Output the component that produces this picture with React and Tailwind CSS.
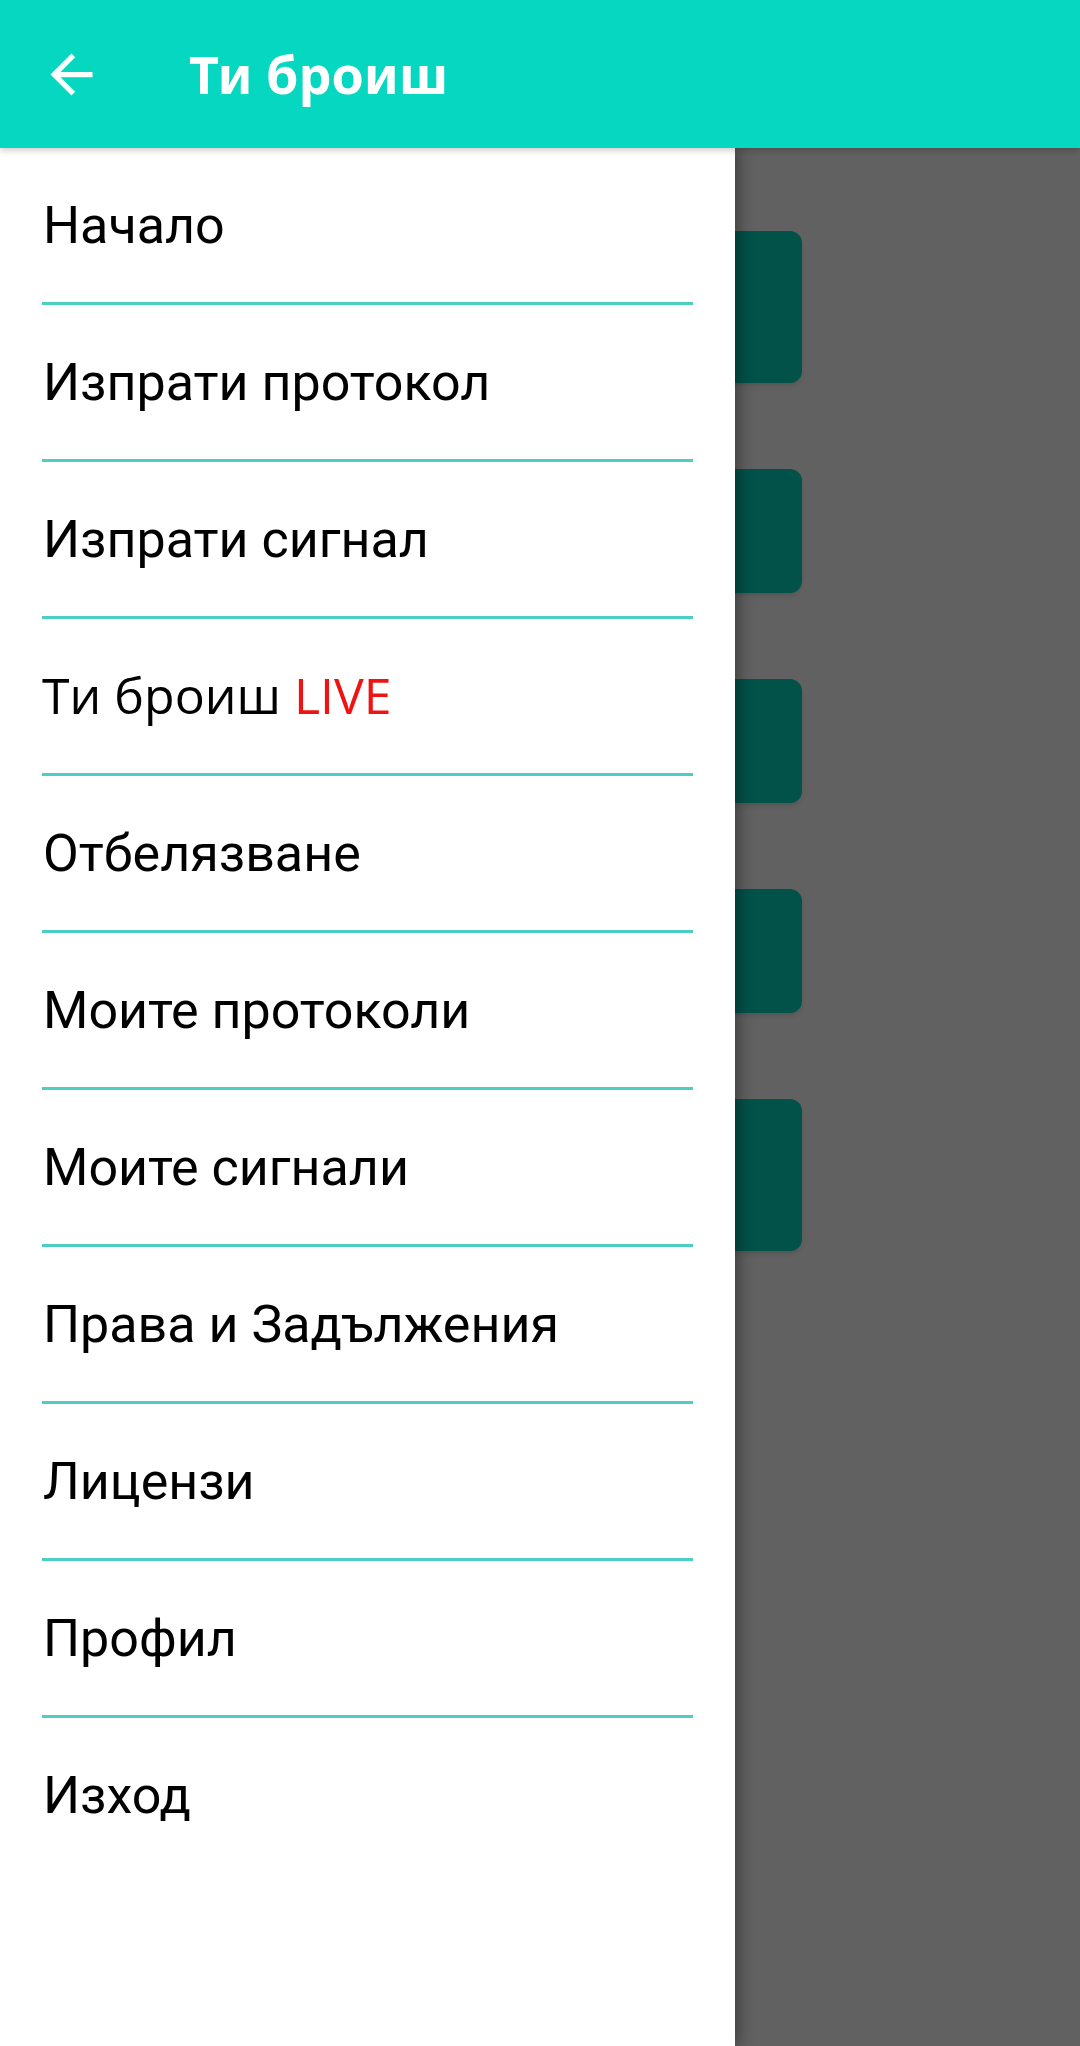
import React from 'react';

const items = [
  { label: 'Начало' },
  { label: 'Изпрати протокол' },
  { label: 'Изпрати сигнал' },
  { label: 'Ти броиш', live: true },
  { label: 'Отбелязване' },
  { label: 'Моите протоколи' },
  { label: 'Моите сигнали' },
  { label: 'Права и Задължения' },
  { label: 'Лицензи' },
  { label: 'Профил' },
  { label: 'Изход', last: true },
];

const cards = ['h-[152px]', 'h-[124px]', 'h-[124px]', 'h-[124px]', 'h-[152px]'];

const BackArrow = () => (
  <svg width="63" height="63" viewBox="0 0 24 24" fill="#ffffff">
    <path d="M20 11H7.83l5.59-5.59L12 4l-8 8 8 8 1.41-1.41L7.83 13H20v-2z" />
  </svg>
);

const App = () => {
  return (
    <div className="relative h-[2046px] w-[1080px] overflow-hidden bg-white font-['Roboto',sans-serif]">
      {/* Toolbar */}
      <header className="relative z-20 flex h-[148px] items-center bg-[#06d7c0] shadow-[0_3px_6px_rgba(0,0,0,0.18)]">
        <div className="ml-[40px] flex">
          <BackArrow />
        </div>
        <h1 className="ml-[86px] font-['Noto_Sans',sans-serif] text-[52px] font-bold leading-none text-white">
          Ти броиш
        </h1>
      </header>

      <div className="relative h-[1898px]">
        {/* Page content behind the drawer */}
        <main className="flex w-[802px] flex-col gap-[86px] pl-[40px] pt-[83px]">
          {cards.map((h, i) => (
            <div key={i} className={`${h} rounded-[12px] bg-[#06d7c0] shadow-md`} />
          ))}
        </main>

        {/* Scrim */}
        <div className="absolute inset-0 bg-black/[0.62]" />

        {/* Navigation drawer */}
        <nav className="absolute inset-y-0 left-0 w-[735px] bg-white px-[42px] shadow-[4px_0_14px_rgba(0,0,0,0.35)]">
          {items.map((item) => (
            <div key={item.label}>
              <div className="pt-[52px] pb-[50px]">
                {item.live ? (
                  <p className="h-[52px] font-['Open_Sans',sans-serif] text-[50px] leading-[49px] text-black">
                    {item.label} <span className="text-[#ef1414]">LIVE</span>
                  </p>
                ) : (
                  <p className="h-[52px] pl-[1px] text-[52px] leading-none text-black">{item.label}</p>
                )}
              </div>
              {!item.last && <div className="h-[3px] bg-[#4ecdc4]" />}
            </div>
          ))}
        </nav>
      </div>
    </div>
  );
};

export default App;
